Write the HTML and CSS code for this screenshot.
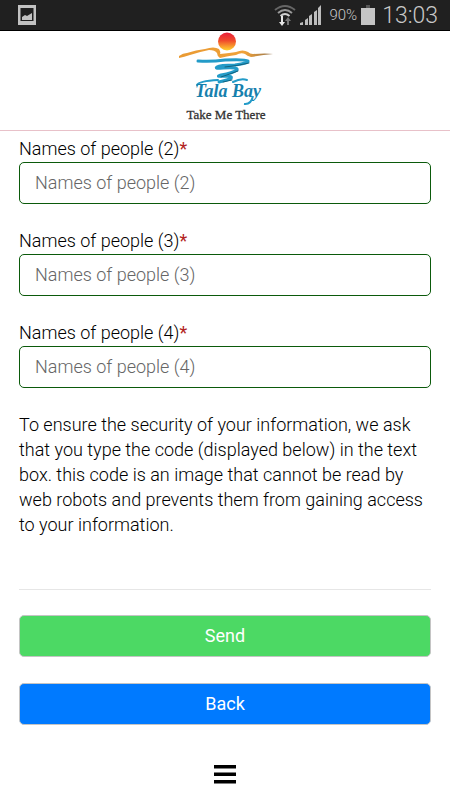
FILE: index.html
```html
<!DOCTYPE html>
<html lang="en">
<head>
<meta charset="utf-8">
<meta name="viewport" content="width=device-width, initial-scale=1">
<title>Tala Bay</title>
<link rel="stylesheet" href="styles.css">
</head>
<body>
<div class="status">
  <svg class="status-picture" width="20" height="22" viewBox="0 0 20 22" aria-hidden="true">
    <path fill="#c2c2c2" fill-rule="evenodd" d="M1 1H19V21H1ZM3.500 4V17H16.500V4Z"/>
    <path fill="#c2c2c2" d="M5 16V13L8 11L10 12L15 9V16Z"/>
  </svg>
  <div class="status-info">
    <svg width="22" height="24" viewBox="0 0 22 24" aria-hidden="true">
      <g fill="none" stroke-width="2">
        <path stroke="#666" d="M1 7Q11-1 21 7"/>
        <path stroke="#999" d="M4 10Q11 4 18 10"/>
        <path stroke="#d0d0d0" d="M6.500 13Q11 9 15.500 13"/>
      </g>
      <path fill="#e8e8e8" d="M7 13H9V19H11L8 23L5 19H7Z"/>
      <path fill="#777" d="M13 22H15V18H17L14 14L11 18H13Z"/>
    </svg>
    <svg width="22" height="24" viewBox="0 0 22 24" aria-hidden="true">
      <path fill="#bdbdbd" d="M0 22V20L3 19V22ZM5 22V17L8 15V22ZM9 22V13L12 11V22ZM14 22V9L17 7V22ZM18 22V5L21 2V22Z"/>
    </svg>
    <span class="battery-level">90%</span>
    <svg width="14" height="24" viewBox="0 0 14 24" aria-hidden="true">
      <path fill="#555" d="M5 2H9V5H5Z"/><path fill="#c4c4c4" d="M0 5H14V22H0Z"/>
    </svg>
    <span class="clock">13:03</span>
  </div>
</div>
<header class="header">
  <svg width="100" height="94" viewBox="0 0 100 94" role="img" aria-label="Tala Bay, Take Me There">
    <defs>
      <linearGradient id="sun" x1="0" y1="0" x2="0" y2="1">
        <stop offset="0" stop-color="#e9203b"/><stop offset=".45" stop-color="#f04a2c"/><stop offset="1" stop-color="#ffd52e"/>
      </linearGradient>
      <linearGradient id="sand" x1="0" y1="0" x2="1" y2="0">
        <stop offset="0" stop-color="#e99a33"/><stop offset=".7" stop-color="#efa23a"/><stop offset="1" stop-color="#93734d"/>
      </linearGradient>
    </defs>
    <circle cx="52" cy="10.500" r="9" fill="url(#sun)"/>
    <path fill="url(#sand)" d="M4 25Q8 22 12 22Q21 19 30 18Q39 15 44 18Q46 21 45 23Q55 22 61 21Q68 18 73 21Q75 23 78 23Q91 22 98 23Q87 24 76 26Q72 25 70 23Q66 21 61 24Q53 25 45 27Q42 25 42 22Q40 19 34 19Q24 21 15 24Q9 26 4 27Z"/>
    <g fill="none" stroke="#239bc8" stroke-linecap="round" stroke-linejoin="round">
      <path stroke-width="3" d="M23 30Q36 31 50 29Q70 28 73 30Q74 32 60 34Q45 34 42 36Q39 38 48 37Q64 36 62 39Q58 42 46 44Q40 46 48 45Q60 45 55 48Q48 50 44 51"/>
      <path stroke-width="1" stroke="#12627e" d="M74 32Q62 35 50 36M63 40Q55 43 46 46M57 49L48 51"/>
      <path stroke-width="2" d="M22 54Q24 50 43 49M58 51Q66 47 72 49"/>
    </g>
    <text class="logo-name" x="53" y="66" text-anchor="middle">Tala Bay</text>
    <path d="M78 65Q76 74 69 73" fill="none" stroke="#239bc8" stroke-width="2"/>
    <text class="logo-tagline" x="51" y="88" text-anchor="middle">Take Me There</text>
  </svg>
</header>
<main class="content">
  <form class="form">
    <div class="field">
      <label for="name2">Names of people (2)<span class="required">*</span></label>
      <input id="name2" type="text" placeholder="Names of people (2)">
    </div>
    <div class="field">
      <label for="name3">Names of people (3)<span class="required">*</span></label>
      <input id="name3" type="text" placeholder="Names of people (3)">
    </div>
    <div class="field">
      <label for="name4">Names of people (4)<span class="required">*</span></label>
      <input id="name4" type="text" placeholder="Names of people (4)">
    </div>
    <p class="notice">To ensure the security of your information, we ask that you type the code (displayed below) in the text box. this code is an image that cannot be read by web robots and prevents them from gaining access to your information.</p>
    <div class="actions">
      <button class="button send" type="submit">Send</button>
      <button class="button back" type="button">Back</button>
    </div>
  </form>
</main>
<footer class="footer">
  <button class="menu" type="button" aria-label="Menu">
    <svg width="22" height="20" viewBox="0 0 22 20" aria-hidden="true"><path fill="#000" d="M0 1H22V4.500H0ZM0 8.500H22V12H0ZM0 16H22V19.500H0Z"/></svg>
  </button>
</footer>
</body>
</html>
```
FILE: styles.css
```css
* {
  box-sizing: border-box;
}

body {
  margin: 0;
  background: #fff;
  color: #000;
  font-family: Roboto, "Liberation Sans", sans-serif;
  font-size: 18px;
  font-weight: 300;
  line-height: 25px;
}

.status {
  display: flex;
  align-items: center;
  justify-content: space-between;
  height: 31px;
  padding: 0 12px 0 17px;
  background: #202020;
  border-bottom: 1px solid #000;
  color: #c8c8c8;
}

.status-info {
  display: flex;
  align-items: center;
  gap: 4px;
}

.battery-level {
  padding-left: 3px;
  font-size: 15px;
}

.clock {
  padding-left: 3px;
  font-size: 23px;
}

.header {
  display: flex;
  justify-content: center;
  height: 100px;
  border-bottom: 1px solid #e8c1c9;
}

.logo-name {
  fill: #1680ad;
  font-family: "Liberation Serif", serif;
  font-size: 18px;
  font-style: italic;
  font-weight: 700;
}

.logo-tagline {
  fill: #333;
  stroke: #333;
  stroke-width: 0.3px;
  font-family: "Liberation Serif", serif;
  font-size: 13px;
  font-weight: 400;
}

.content {
  padding: 5px 19px 0;
}

.field {
  display: flex;
  flex-direction: column;
  gap: 1px;
  margin-bottom: 24px;
}

.required {
  color: #b22222;
  font-weight: 400;
}

.field input {
  width: 100%;
  height: 42px;
  padding: 0 15px 2px;
  border: 1px solid #0b5a0b;
  border-radius: 5px;
  background: #fff;
  font: inherit;
}

.field input::placeholder {
  color: #666;
  opacity: 1;
}

.notice {
  margin: 0;
  padding-bottom: 52px;
  border-bottom: 1px solid #e6e6e6;
}

.actions {
  display: flex;
  flex-direction: column;
  gap: 26px;
  padding-top: 25px;
}

.button {
  height: 42px;
  padding: 0 0 2px;
  border: 1px solid #c4c4c4;
  border-radius: 5px;
  color: #fff;
  font: inherit;
  font-weight: 400;
}

.send {
  background: #4cd964;
}

.back {
  background: #007aff;
}

.footer {
  display: flex;
  justify-content: center;
  padding-top: 39px;
}

.menu {
  display: flex;
  padding: 0;
  border: 0;
  background: none;
}
```
